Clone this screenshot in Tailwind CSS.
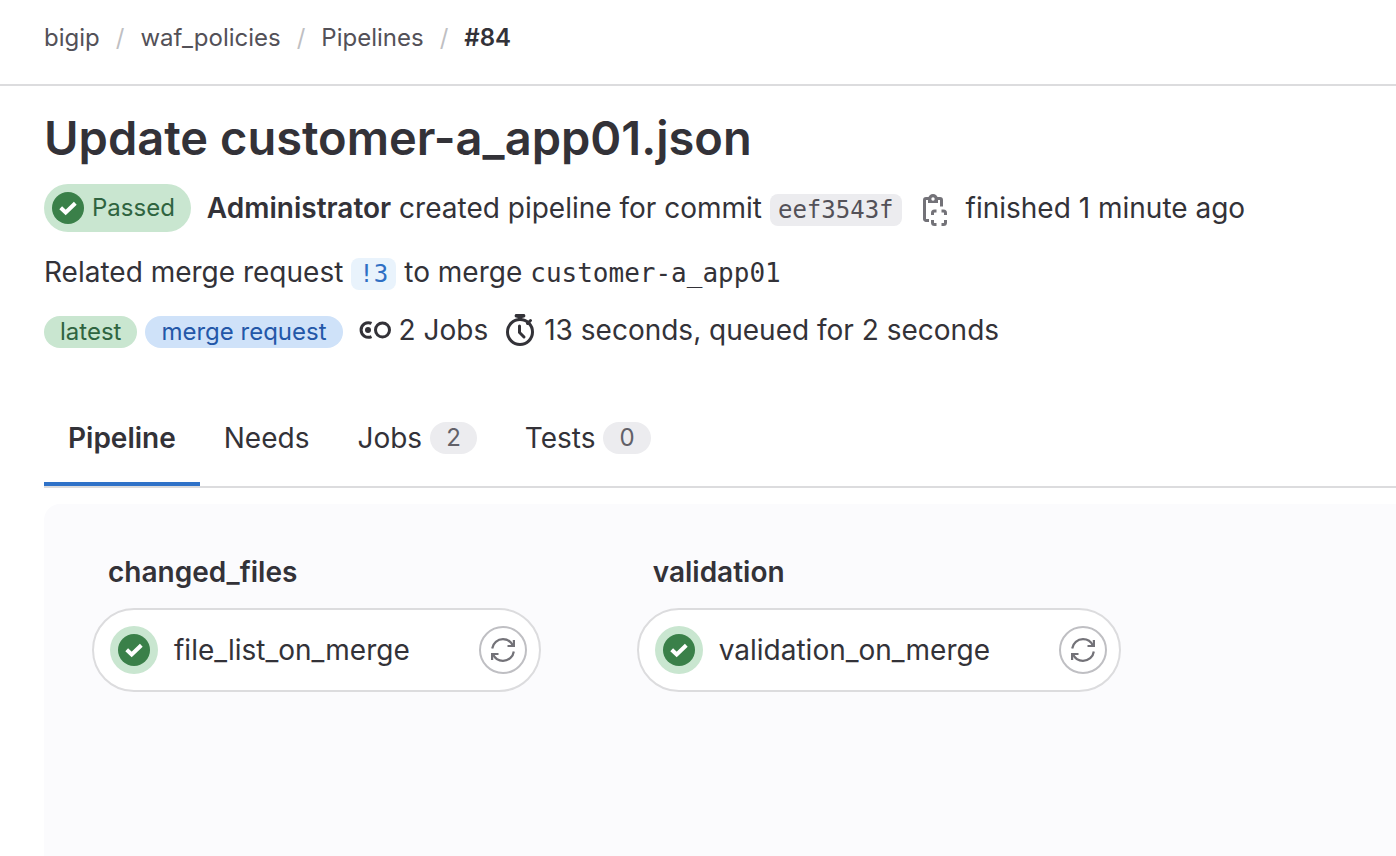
<!DOCTYPE html>
<html lang="en">
<head>
<meta charset="utf-8">
<meta name="viewport" content="width=device-width, initial-scale=1">
<title>Update customer-a_app01.json · Pipeline #84</title>
<script src="https://cdn.jsdelivr.net/npm/@tailwindcss/browser@4"></script>
</head>
<body class="flex min-h-screen flex-col overflow-x-hidden bg-white font-['Inter',sans-serif] text-[28px] leading-10 text-[#333238]">
<svg class="hidden" aria-hidden="true">
  <symbol id="check" viewBox="0 0 32 32"><circle cx="16" cy="16" r="16" fill="#3a8049"/><path d="M8.700 15.700l5 4.800L23.300 11.300" fill="none" stroke="#fff" stroke-width="4"/></symbol>
  <symbol id="retry" viewBox="0 0 24 24"><g fill="none" stroke="#737278" stroke-width="2.200"><path d="M1.200 10.500C1.900 5 6.500 1.200 12 1.200c4.400 0 8.200 2.600 10 6.600"/><path d="M22.900 2v6H16.500"/><path d="M22.800 13.500C22.100 19 17.500 22.800 12 22.800c-4.400 0-8.200-2.600-10-6.600"/><path d="M1.100 22v-6H7.500"/></g></symbol>
</svg>

<header class="border-b-2 border-[#dcdcde] px-11 pt-[18px] pb-[26px]">
  <nav aria-label="Breadcrumb">
    <ol class="flex items-center gap-4 text-2xl leading-10 text-[#535158]">
      <li><a href="#">bigip</a></li>
      <li aria-hidden="true" class="text-[#bfbfc3]">/</li>
      <li><a href="#">waf_policies</a></li>
      <li aria-hidden="true" class="text-[#bfbfc3]">/</li>
      <li><a href="#">Pipelines</a></li>
      <li aria-hidden="true" class="text-[#bfbfc3]">/</li>
      <li><a href="#" aria-current="page" class="font-semibold text-[#333238]">#84</a></li>
    </ol>
  </nav>
</header>

<main class="flex grow flex-col pt-6 pl-11">
  <h1 class="text-[47px] leading-14 font-semibold">Update customer-a_app01.json</h1>

  <div class="mt-[18px] flex items-center whitespace-nowrap">
    <a href="#" class="flex h-12 items-center gap-2 rounded-full bg-[#c9e6d0] pr-4 pl-2 text-2xl text-[#2f6440]"><svg class="size-8"><use href="#check"/></svg>Passed</a>
    <div class="ml-4 flex items-baseline gap-2">
      <p><a href="#" class="font-semibold">Administrator</a> created pipeline for commit</p>
      <a href="#" class="rounded-lg bg-[#ececef] px-2 font-['DejaVu_Sans_Mono',monospace] text-2xl leading-8 text-[#535158]">eef3543f</a>
    </div>
    <button type="button" aria-label="Copy commit SHA" class="mx-4 flex h-9 w-8 items-end justify-center">
      <svg class="size-8" viewBox="0 0 32 32" fill="none" stroke="#737278" stroke-width="3"><path d="M11 26.500H8a1.500 1.500 0 0 1-1.500-1.500V6A1.500 1.500 0 0 1 8 4.500h14A1.500 1.500 0 0 1 23.500 6v6.500"/><path d="M10 9V4.500C10.500 1.800 12.500 0 15 0s4.500 1.800 5 4.500V9z" fill="#737278" stroke="none"/><circle cx="15" cy="5" r="1.700" fill="#fff" stroke="none"/><path d="M14.500 21v-2a2 2 0 0 1 2-2h2M23.500 17h2a2 2 0 0 1 2 2v2M27.500 26v2.500a2 2 0 0 1-2 2h-2M18.500 30.500h-2a2 2 0 0 1-2-2V26"/></svg>
    </button>
    <p>finished 1 minute ago</p>
  </div>

  <div class="mt-5 flex items-baseline gap-2 whitespace-nowrap">
    <p>Related merge request</p>
    <a href="#" class="rounded-lg bg-[#e9f3fc] px-2 font-['DejaVu_Sans_Mono',monospace] text-2xl leading-8 text-[#2f6fc4]">!3</a>
    <p>to merge</p>
    <a href="#" class="font-['DejaVu_Sans_Mono',monospace] text-[26px] leading-8">customer-a_app01</a>
  </div>

  <div class="mt-[18px] flex items-baseline whitespace-nowrap">
    <span class="rounded-full bg-[#c9e6d0] px-4 text-2xl leading-8 text-[#2f6440]">latest</span>
    <span class="ml-2 rounded-full bg-[#cfe2f9] px-4 text-2xl leading-8 text-[#2357a8]">merge request</span>
    <svg class="ml-4 size-8 self-center" viewBox="0 0 32 32" fill="none" stroke="#333238" stroke-width="3" aria-hidden="true"><path d="M12.500 9.400A7.300 7.300 0 1 0 12.500 22.600"/><circle cx="9" cy="16" r="3" fill="#333238" stroke="none"/><circle cx="23.500" cy="16" r="7"/></svg>
    <span class="ml-2">2 Jobs</span>
    <svg class="ml-4 size-8 self-center" viewBox="0 0 32 32" fill="none" stroke="#333238" stroke-width="3" aria-hidden="true"><circle cx="16" cy="18" r="12.500"/><path d="M15.500 12v6.500l4.500 4.500M26.500 6.500l-3 3" stroke-linecap="round"/><path d="M13 0h6a1.500 1.500 0 0 1 1 3.500L18 4v2h-4V4l-2-.5A1.500 1.500 0 0 1 13 0z" fill="#333238" stroke="none"/></svg>
    <span class="ml-2">13 seconds, queued for 2 seconds</span>
  </div>

  <div role="tablist" class="mt-10 flex border-b-2 border-[#dcdcde]">
    <button type="button" role="tab" aria-selected="true" class="border-b-4 border-[#2f72c8] px-6 pt-7 pb-6 font-semibold">Pipeline</button>
    <button type="button" role="tab" aria-selected="false" class="border-b-4 border-transparent px-6 pt-7 pb-6">Needs</button>
    <button type="button" role="tab" aria-selected="false" class="flex items-center gap-2 border-b-4 border-transparent px-6 pt-7 pb-6">Jobs<span class="rounded-full bg-[#ececef] px-4 text-2xl leading-8 text-[#626168]">2</span></button>
    <button type="button" role="tab" aria-selected="false" class="flex items-center gap-2 border-b-4 border-transparent px-6 pt-7 pb-6">Tests<span class="rounded-full bg-[#ececef] px-4 text-2xl leading-8 text-[#626168]">0</span></button>
  </div>

  <section role="tabpanel" aria-label="Pipeline" class="mt-4 flex grow items-start gap-24 rounded-tl-2xl bg-[#fbfbfd] pt-12 pl-12">
    <div>
      <h2 class="pl-4 font-semibold">changed_files</h2>
      <div class="mt-4 flex items-center rounded-full border-2 border-[#dcdcde] bg-white py-4 pr-3 pl-4">
        <a href="#" class="flex items-center gap-4"><span class="rounded-full bg-[#c9e6d0] p-2"><svg class="size-8"><use href="#check"/></svg></span>file_list_on_merge</a>
        <button type="button" aria-label="Retry file_list_on_merge" class="ml-[69px] flex size-12 items-center justify-center rounded-full border-2 border-[#bfbfc3]"><svg class="size-6"><use href="#retry"/></svg></button>
      </div>
    </div>
    <div>
      <h2 class="pl-4 font-semibold">validation</h2>
      <div class="mt-4 flex items-center rounded-full border-2 border-[#dcdcde] bg-white py-4 pr-3 pl-4">
        <a href="#" class="flex items-center gap-4"><span class="rounded-full bg-[#c9e6d0] p-2"><svg class="size-8"><use href="#check"/></svg></span>validation_on_merge</a>
        <button type="button" aria-label="Retry validation_on_merge" class="ml-[69px] flex size-12 items-center justify-center rounded-full border-2 border-[#bfbfc3]"><svg class="size-6"><use href="#retry"/></svg></button>
      </div>
    </div>
  </section>
</main>
</body>
</html>
